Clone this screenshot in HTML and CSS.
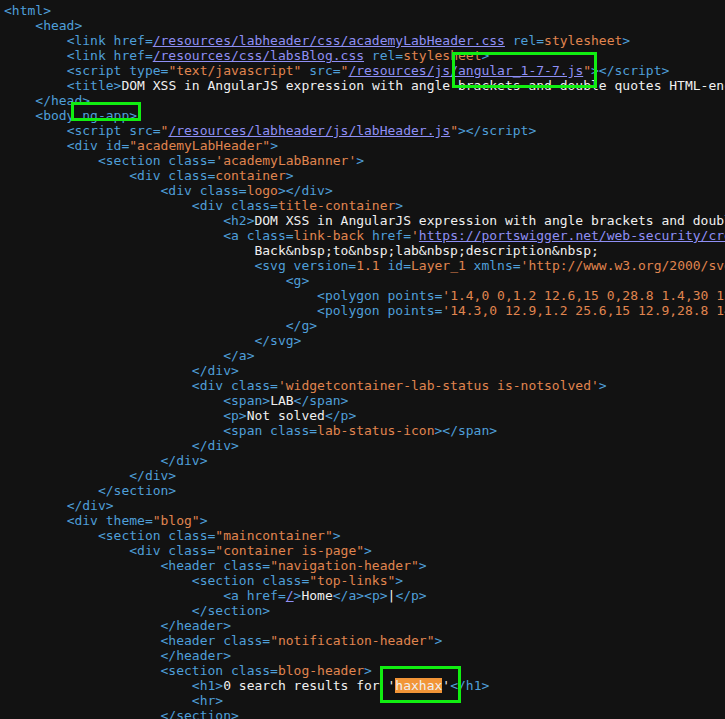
FILE: index.html
```
<!DOCTYPE html>
<html lang="en">

<head>
  <link rel="stylesheet" href="styles.css">
</head>

<body>
<pre class="source"><span class="tg">&lt;html&gt;</span>
    <span class="tg">&lt;head&gt;</span>
        <span class="tg">&lt;link href=</span><span class="u">/resources/labheader/css/academyLabHeader.css</span><span class="tg"> rel=</span><span class="v">stylesheet</span><span class="tg">&gt;</span>
        <span class="tg">&lt;link href=</span><span class="u">/resources/css/labsBlog.css</span><span class="tg"> rel=</span><span class="v">stylesheet</span><span class="tg">&gt;</span>
        <span class="tg">&lt;script type=</span><span class="v">"text/javascript"</span><span class="tg"> src=</span><span class="v">"</span><span class="u">/resources/js/<span class="mark mark-js">angular_1-7-7.js</span></span><span class="v">"</span><span class="tg">&gt;&lt;/script&gt;</span>
        <span class="tg">&lt;title&gt;</span>DOM XSS in AngularJS expression with angle brackets and double quotes HTML-encoded<span class="tg">&lt;/title&gt;</span>
    <span class="tg">&lt;/head&gt;</span>
    <span class="tg">&lt;body<span class="mark mark-app"> ng-app&gt;</span></span>
        <span class="tg">&lt;script src=</span><span class="v">"</span><span class="u">/resources/labheader/js/labHeader.js</span><span class="v">"</span><span class="tg">&gt;&lt;/script&gt;</span>
        <span class="tg">&lt;div id=</span><span class="v">"academyLabHeader"</span><span class="tg">&gt;</span>
            <span class="tg">&lt;section class=</span><span class="v">'academyLabBanner'</span><span class="tg">&gt;</span>
                <span class="tg">&lt;div class=</span><span class="v">container</span><span class="tg">&gt;</span>
                    <span class="tg">&lt;div class=</span><span class="v">logo</span><span class="tg">&gt;&lt;/div&gt;</span>
                        <span class="tg">&lt;div class=</span><span class="v">title-container</span><span class="tg">&gt;</span>
                            <span class="tg">&lt;h2&gt;</span>DOM XSS in AngularJS expression with angle brackets and double quotes HTML-encoded<span class="tg">&lt;/h2&gt;</span>
                            <span class="tg">&lt;a class=</span><span class="v">link-back</span><span class="tg"> href=</span><span class="v">'</span><span class="u">https://portswigger.net/web-security/cross-site-scripting/contexts/client-side-template-injection/lab-angular-expression-with-angle-brackets-and-double-quotes-html-encoded</span><span class="v">'</span><span class="tg">&gt;</span>
                                Back&amp;nbsp;to&amp;nbsp;lab&amp;nbsp;description&amp;nbsp;
                                <span class="tg">&lt;svg version=</span><span class="v">1.1</span><span class="tg"> id=</span><span class="v">Layer_1</span><span class="tg"> xmlns=</span><span class="v">'http://www.w3.org/2000/svg'</span><span class="tg"> xmlns:xlink=</span><span class="v">'http://www.w3.org/1999/xlink'</span><span class="tg">&gt;</span>
                                    <span class="tg">&lt;g&gt;</span>
                                        <span class="tg">&lt;polygon points=</span><span class="v">'1.4,0 0,1.2 12.6,15 0,28.8 1.4,30 15.1,15'</span><span class="tg">&gt;&lt;/polygon&gt;</span>
                                        <span class="tg">&lt;polygon points=</span><span class="v">'14.3,0 12.9,1.2 25.6,15 12.9,28.8 14.3,30 28,15'</span><span class="tg">&gt;&lt;/polygon&gt;</span>
                                    <span class="tg">&lt;/g&gt;</span>
                                <span class="tg">&lt;/svg&gt;</span>
                            <span class="tg">&lt;/a&gt;</span>
                        <span class="tg">&lt;/div&gt;</span>
                        <span class="tg">&lt;div class=</span><span class="v">'widgetcontainer-lab-status is-notsolved'</span><span class="tg">&gt;</span>
                            <span class="tg">&lt;span&gt;</span>LAB<span class="tg">&lt;/span&gt;</span>
                            <span class="tg">&lt;p&gt;</span>Not solved<span class="tg">&lt;/p&gt;</span>
                            <span class="tg">&lt;span class=</span><span class="v">lab-status-icon</span><span class="tg">&gt;&lt;/span&gt;</span>
                        <span class="tg">&lt;/div&gt;</span>
                    <span class="tg">&lt;/div&gt;</span>
                <span class="tg">&lt;/div&gt;</span>
            <span class="tg">&lt;/section&gt;</span>
        <span class="tg">&lt;/div&gt;</span>
        <span class="tg">&lt;div theme=</span><span class="v">"blog"</span><span class="tg">&gt;</span>
            <span class="tg">&lt;section class=</span><span class="v">"maincontainer"</span><span class="tg">&gt;</span>
                <span class="tg">&lt;div class=</span><span class="v">"container is-page"</span><span class="tg">&gt;</span>
                    <span class="tg">&lt;header class=</span><span class="v">"navigation-header"</span><span class="tg">&gt;</span>
                        <span class="tg">&lt;section class=</span><span class="v">"top-links"</span><span class="tg">&gt;</span>
                            <span class="tg">&lt;a href=</span><span class="u">/</span><span class="tg">&gt;</span>Home<span class="tg">&lt;/a&gt;&lt;p&gt;</span>|<span class="tg">&lt;/p&gt;</span>
                        <span class="tg">&lt;/section&gt;</span>
                    <span class="tg">&lt;/header&gt;</span>
                    <span class="tg">&lt;header class=</span><span class="v">"notification-header"</span><span class="tg">&gt;</span>
                    <span class="tg">&lt;/header&gt;</span>
                    <span class="tg">&lt;section class=</span><span class="v">blog-header</span><span class="tg">&gt;</span>
                        <span class="tg">&lt;h1&gt;</span>0 search results for <span class="mark mark-search">'<span class="hit">haxhax</span>'</span><span class="tg">&lt;/h1&gt;</span>
                        <span class="tg">&lt;hr&gt;</span>
                    <span class="tg">&lt;/section&gt;</span>
</pre>
</body>

</html>
```

FILE: styles.css
```
* {
  box-sizing: border-box;
}

body {
  margin: 0;
  background-color: #121212;
  overflow: hidden;
}

.source {
  margin: 0;
  padding: 3px 0 0 4px;
  font-family: 'DejaVu Sans Mono', monospace;
  font-size: 13px;
  line-height: 15px;
  color: #f0f0f0;
  white-space: pre;
}

.tg {
  color: #4f9fd9;
}

.v {
  color: #e0854f;
}

.u {
  color: #8f8ff5;
  text-decoration: underline;
}

.hit {
  background-color: #f29537;
  color: #f0f0f0;
}

.mark {
  position: relative;
}

.mark::after {
  content: '';
  position: absolute;
  border: 3px solid #11ee11;
}

.mark-js::after {
  left: -6px;
  right: -14px;
  top: -11px;
  bottom: -10px;
}

.mark-app::after {
  left: -3px;
  right: -4px;
  top: -6px;
  bottom: 2px;
}

.mark-search::after {
  left: -8px;
  right: -11px;
  top: -12px;
  bottom: -10px;
}
```
